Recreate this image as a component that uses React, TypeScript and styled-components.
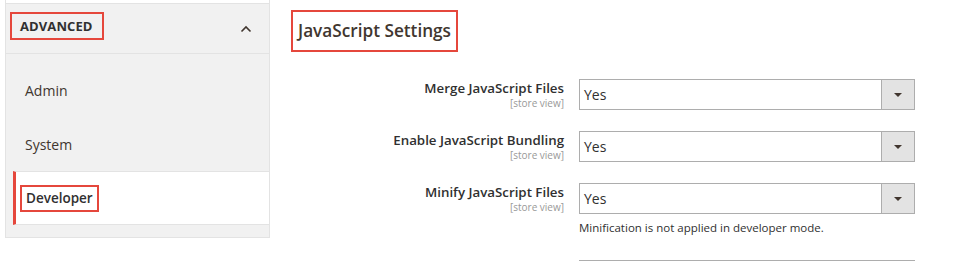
import React from 'react';
import styled, { createGlobalStyle } from 'styled-components';

const GlobalStyle = createGlobalStyle`
  html, body {
    margin: 0;
    padding: 0;
    background: #ffffff;
  }
  body {
    width: 960px;
    height: 262px;
    overflow: hidden;
    font-family: "Open Sans", "Liberation Sans", sans-serif;
    color: #303030;
  }
`;

const RED = '#e5473c';

interface Field {
    label: string;
    value: string;
    note?: string;
}

const fields: Field[] = [
    { label: 'Merge JavaScript Files', value: 'Yes' },
    { label: 'Enable JavaScript Bundling', value: 'Yes' },
    { label: 'Minify JavaScript Files', value: 'Yes', note: 'Minification is not applied in developer mode.' },
];

const navItems = ['Admin', 'System', 'Developer'];

const App = () => {
    return (
        <Page>
            <GlobalStyle />
            <Sidebar>
                <PrevSection />
                <NavGroup>
                    <NavHeader>
                        <Marked>ADVANCED</Marked>
                        <svg width="12" height="8" viewBox="0 0 12 8">
                            <path d="M1.5 6.5 L6 2 L10.5 6.5" fill="none" stroke="#41362f" strokeWidth="1.6" />
                        </svg>
                    </NavHeader>
                    <NavList>
                        {navItems.map(item => {
                            const active = item === 'Developer';
                            return (
                                <NavItem key={item} active={active}>
                                    {active ? <ActiveLabel>{item}</ActiveLabel> : item}
                                </NavItem>
                            );
                        })}
                    </NavList>
                </NavGroup>
            </Sidebar>

            <Main>
                <Heading>JavaScript Settings</Heading>
                <Fieldset>
                    {fields.map(f => (
                        <Row key={f.label}>
                            <Label>
                                <LabelText>{f.label}</LabelText>
                                <Scope>[store view]</Scope>
                            </Label>
                            <Control>
                                <Select>
                                    <SelectValue>{f.value}</SelectValue>
                                    <SelectButton>
                                        <Arrow />
                                    </SelectButton>
                                </Select>
                                {f.note && <Note>{f.note}</Note>}
                            </Control>
                        </Row>
                    ))}
                    <Row>
                        <div />
                        <NextControl />
                    </Row>
                </Fieldset>
            </Main>
        </Page>
    );
};

const Page = styled.div`
    display: flex;
    align-items: flex-start;
    padding-left: 5px;
    height: 262px;
    overflow: hidden;
`;

const Sidebar = styled.nav`
    width: 265px;
    flex-shrink: 0;
    display: flex;
    flex-direction: column;
`;

const PrevSection = styled.div`
    height: 3px;
    background: #ffffff;
    border: 1px solid #e3e3e3;
    border-top: none;
`;

const NavGroup = styled.div`
    background: #f1f1f1;
    border: 1px solid #e3e3e3;
    border-top: none;
    padding-bottom: 12px;
`;

const NavHeader = styled.div`
    height: 50px;
    border-bottom: 1px solid #e3e3e3;
    display: flex;
    align-items: center;
    justify-content: space-between;
    padding: 0 17px 0 4px;
    box-sizing: border-box;
`;

const Marked = styled.span`
    border: 2px solid ${RED};
    padding: 3px 9px 3px 8px;
    font-size: 13px;
    font-weight: 700;
    letter-spacing: 0.1px;
    color: #303030;
    line-height: 18px;
    margin-top: -5px;
`;

const NavList = styled.ul`
    list-style: none;
    margin: 0;
    padding: 9px 0 0 0;
`;

const NavItem = styled.li<{ active?: boolean }>`
    height: 54px;
    display: flex;
    align-items: center;
    font-size: 14px;
    color: #41362f;
    padding-left: 19px;
    box-sizing: border-box;
    ${p => p.active && `
        background: #ffffff;
        margin-left: 7px;
        padding-left: 4px;
        border-left: 3px solid ${RED};
        border-top: 1px solid #e3e3e3;
        border-bottom: 1px solid #e3e3e3;
    `}
`;

const ActiveLabel = styled.span`
    border: 2px solid ${RED};
    padding: 2px 4px 3px 4px;
    font-size: 13.5px;
    font-weight: 600;
    color: #303030;
    line-height: 18px;
`;

const Main = styled.main`
    flex: 1;
    padding: 10px 0 0 21px;
`;

const Heading = styled.h2`
    display: inline-block;
    margin: 0;
    border: 2px solid ${RED};
    padding: 8px 5px 9px 5px;
    font-size: 17.2px;
    font-weight: 600;
    line-height: 21px;
    color: #41362f;
`;

const Fieldset = styled.div`
    margin-top: 27px;
    display: flex;
    flex-direction: column;
    gap: 21px;
`;

const Row = styled.div`
    display: grid;
    grid-template-columns: 273px 336px;
    column-gap: 15px;
`;

const Label = styled.div`
    display: flex;
    flex-direction: column;
    align-items: flex-end;
`;

const LabelText = styled.span`
    font-size: 13.3px;
    font-weight: 600;
    color: #303030;
    line-height: 18px;
`;

const Scope = styled.span`
    font-size: 10px;
    color: #999999;
    line-height: 12px;
`;

const Control = styled.div`
    display: flex;
    flex-direction: column;
`;

const Select = styled.div`
    height: 31px;
    box-sizing: border-box;
    border: 1px solid #adadad;
    display: flex;
    background: #ffffff;
`;

const SelectValue = styled.span`
    flex: 1;
    display: flex;
    align-items: center;
    padding-left: 4px;
    font-size: 14px;
    color: #303030;
`;

const SelectButton = styled.span`
    width: 32px;
    background: #e3e3e3;
    border-left: 1px solid #adadad;
    display: flex;
    align-items: center;
    justify-content: center;
`;

const Arrow = styled.span`
    width: 0;
    height: 0;
    border-left: 4px solid transparent;
    border-right: 4px solid transparent;
    border-top: 4px solid #41362f;
`;

const Note = styled.div`
    margin-top: 6px;
    font-size: 11.5px;
    color: #303030;
    line-height: 16px;
`;

const NextControl = styled.div`
    height: 20px;
    border-top: 1px solid #adadad;
    margin-top: 3px;
`;

export default App;
